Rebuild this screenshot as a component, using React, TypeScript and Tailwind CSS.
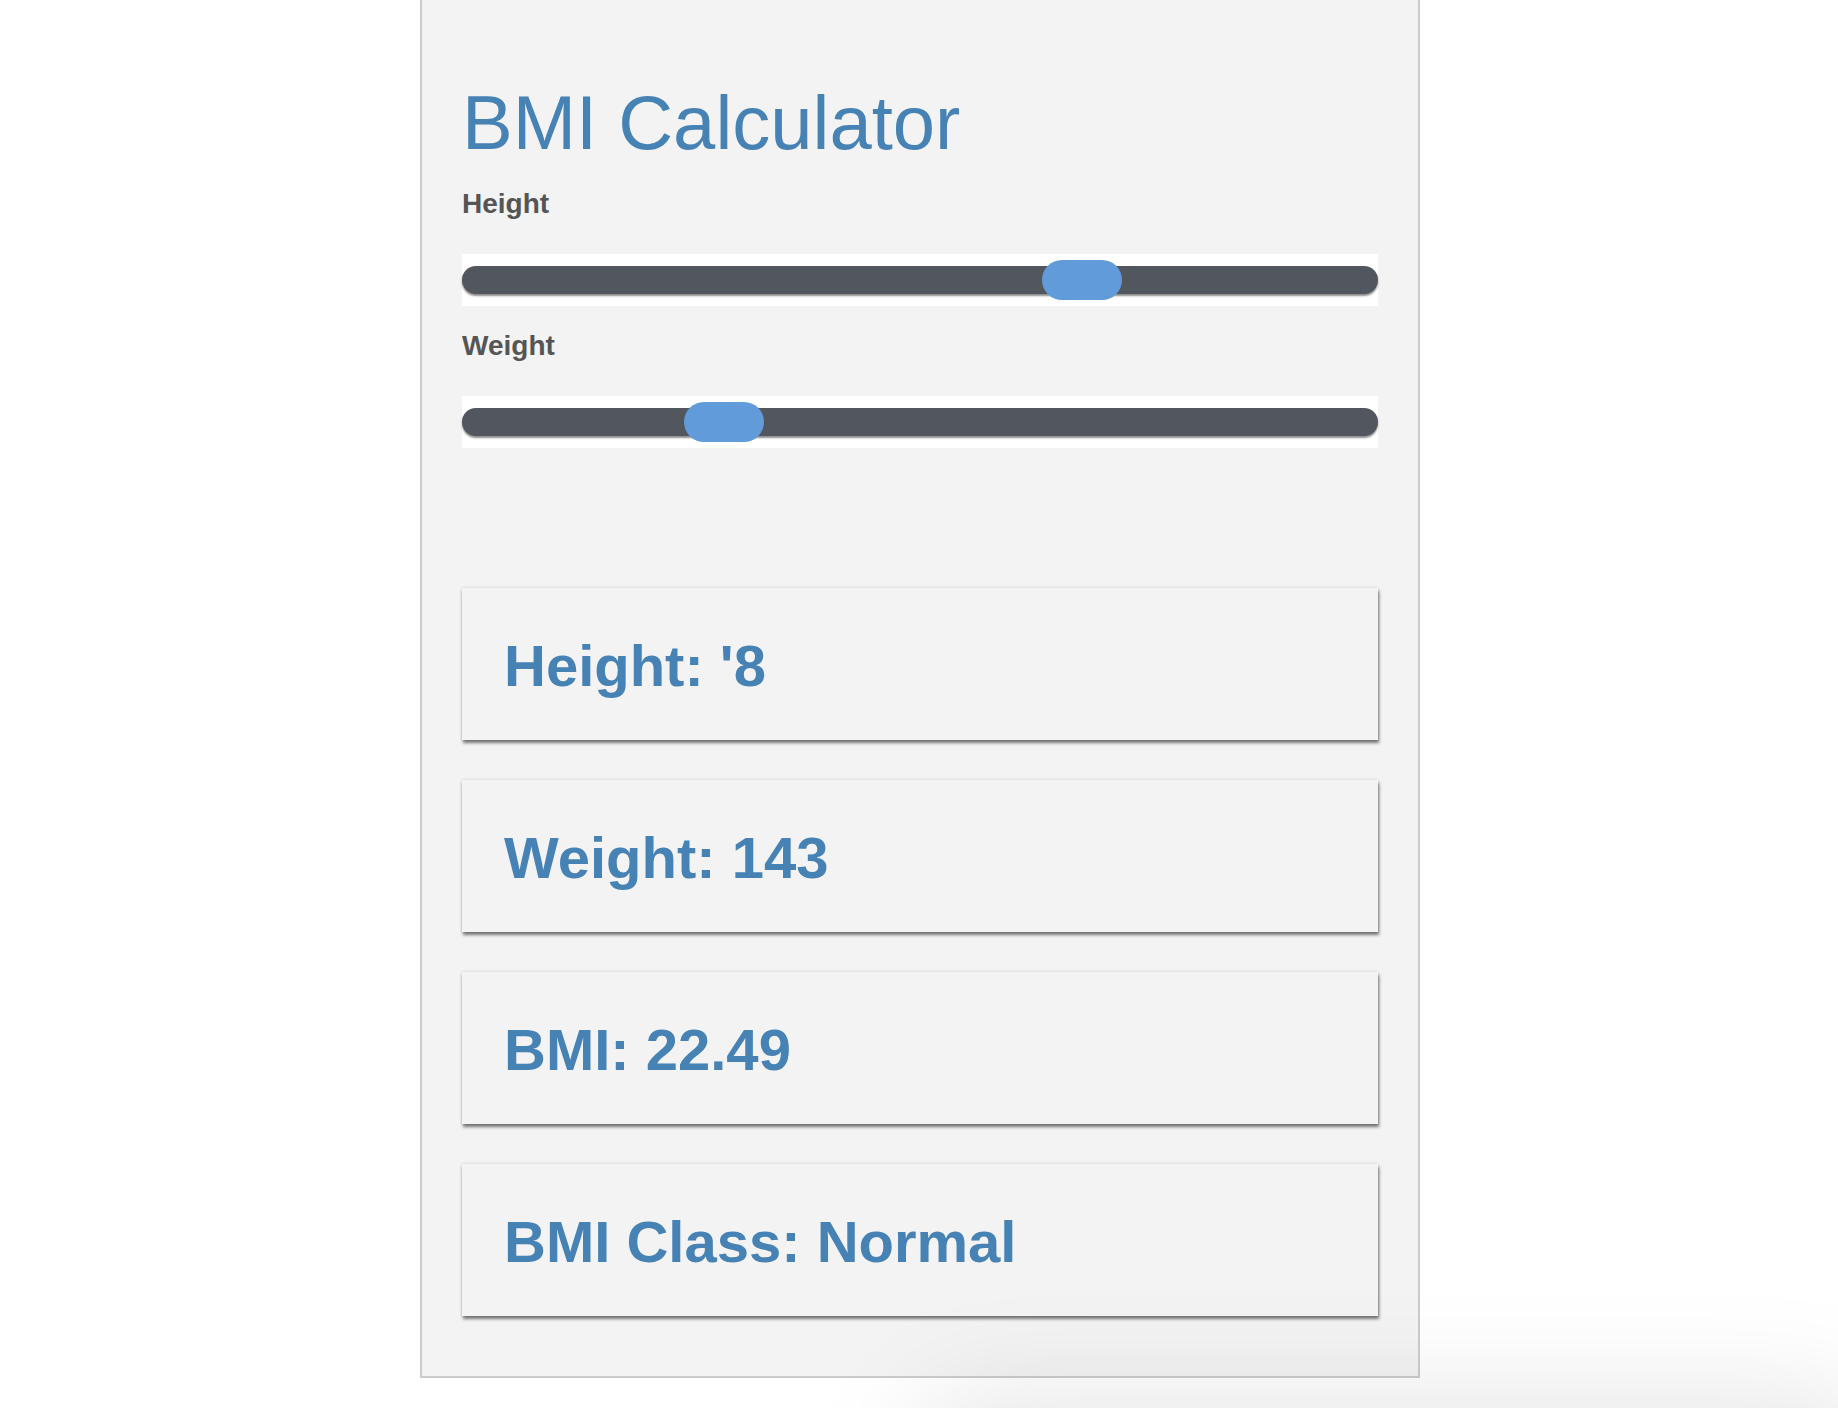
import React from "react";

function Slider({ left }: { left: number }) {
  return (
    <div className="relative h-[52px] w-full bg-white">
      <div className="absolute left-0 right-0 top-[12px] h-[28px] rounded-full bg-[#52565e] shadow-[0_2px_2px_rgba(0,0,0,0.45)]" />
      <div
        className="absolute top-[6px] h-[40px] w-[80px] rounded-[20px] bg-[#629bd9]"
        style={{ left }}
      />
    </div>
  );
}

function Card({ text }: { text: string }) {
  return (
    <div className="h-[152px] bg-[#f3f3f3] pl-[42px] pt-[3px] shadow-[1px_3px_3px_rgba(0,0,0,0.5),0_0_3px_rgba(0,0,0,0.15)]">
      <div className="text-[58px] font-bold leading-[149px] text-[#4682b4]">{text}</div>
    </div>
  );
}

export default function App() {
  return (
    <div
      className="relative min-h-[1408px] w-full overflow-hidden bg-white"
      style={{ fontFamily: '"Liberation Sans", Arial, Helvetica, sans-serif' }}
    >
      <div className="flex justify-center pl-[2px]">
        <div className="w-[1000px] border-x-2 border-b-2 border-[#cccccc] bg-[#f3f3f3] px-[40px] pb-[60px] pt-[83px]">
          <h1 className="text-[76px] font-normal leading-[80px] text-[#4682b4]">BMI Calculator</h1>
          <div className="mt-[25px] text-[28px] font-bold leading-[32px] text-[#555555]">Height</div>
          <div className="mt-[34px]">
            <Slider left={580} />
          </div>
          <div className="mt-[24px] text-[28px] font-bold leading-[32px] text-[#555555]">Weight</div>
          <div className="mt-[34px]">
            <Slider left={222} />
          </div>
          <div className="mt-[140px] flex flex-col gap-[40px]">
            <Card text="Height: '8" />
            <Card text="Weight: 143" />
            <Card text="BMI: 22.49" />
            <Card text="BMI Class: Normal" />
          </div>
        </div>
      </div>
      <div className="pointer-events-none absolute left-[900px] top-[1390px] h-[200px] w-[1000px] rounded-full bg-[rgba(0,0,0,0.09)] blur-[50px]" />
    </div>
  );
}
